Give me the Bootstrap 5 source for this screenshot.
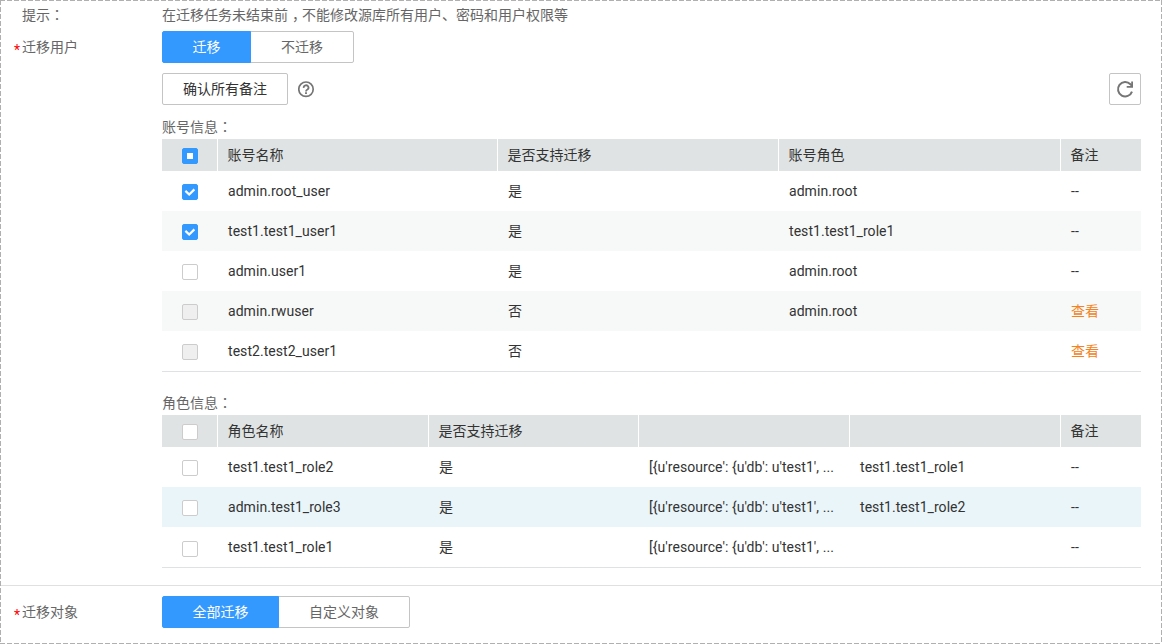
<!DOCTYPE html>
<html lang="zh-CN">
<head>
<meta charset="utf-8">
<meta name="viewport" content="width=device-width, initial-scale=1">
<title>迁移用户</title>
<link href="https://cdn.jsdelivr.net/npm/bootstrap@5.3.0/dist/css/bootstrap.min.css" rel="stylesheet">
<style>
:root{--dash-c:#b0b0b0}
body{font-family:Roboto,"Noto Sans CJK SC",sans-serif;font-size:14px;line-height:20px;color:#333;background:#fff;overflow:hidden}
.frame{height:644px;padding:5px 1px 1px;
  background:
  repeating-linear-gradient(90deg,var(--dash-c) 0 5px,transparent 5px 7px) 0 0/100% 1px no-repeat,
  repeating-linear-gradient(90deg,var(--dash-c) 0 5px,transparent 5px 7px) 0 100%/100% 1px no-repeat,
  repeating-linear-gradient(180deg,var(--dash-c) 0 5px,transparent 5px 7px) 0 0/1px 100% no-repeat,
  repeating-linear-gradient(180deg,var(--dash-c) 0 5px,transparent 5px 7px) 100% 0/1px 100% no-repeat}
.field-label{width:161px;padding-left:21px;color:#666}
.field-label.required{padding-left:13px}
.required::before{content:"*";display:inline-block;width:8px;color:red;line-height:14px;vertical-align:-3px}
.field-body{width:979px;color:#666}
.colon{font-family:"Noto Sans CJK TC",sans-serif;line-height:1}
.comma{font-feature-settings:"halt";padding:0 3px 0 4px}
.btn{--bs-btn-font-size:14px;--bs-btn-line-height:20px;--bs-btn-padding-y:5px;--bs-btn-padding-x:0;--bs-btn-border-radius:2px;--bs-btn-border-color:#c4c4c4;--bs-btn-color:#666;--bs-btn-active-bg:#39f;--bs-btn-active-border-color:#39f;--bs-btn-active-color:#fff;height:32px;white-space:nowrap}
.btn-group{--bs-border-radius:2px}
.btn-confirm{--bs-btn-color:#333;width:126px}
.btn-refresh{width:32px}
.grid-table{--bs-table-color:#333;--bs-table-bg:transparent;table-layout:fixed;width:979px;border-bottom:1px solid #dfe1e2}
.grid-table th,.grid-table td{padding:0 10px;border:0;font-weight:400;vertical-align:middle}
.grid-table th{height:32px;background:#dfe3e4;border-right:1px solid #fff}
.grid-table th:last-child{border-right:0}
.grid-table td{height:40px;padding-left:11px;padding-right:0;letter-spacing:.05px}
.grid-table tr>:first-child{padding:0 0 1px 1px;text-align:center}
.role-table tr>:first-child{padding-bottom:0;padding-top:1px}
.role-table tr:last-child td{height:41px}
.row-alt{background:#f7f9f8}
.row-hover{background:#eaf5fa}
.form-check-input{width:16px;height:16px;margin:0;border-color:#ccc;display:inline-block;vertical-align:middle}
.form-check-input[type=checkbox]{border-radius:2px}
.form-check-input:checked,.form-check-input.partial{background-color:#39f;border-color:#39f}
.form-check-input:checked[type=checkbox]{background-image:url("data:image/svg+xml,%3Csvg xmlns='http://www.w3.org/2000/svg' viewBox='0 0 14 14'%3E%3Cpath fill='none' stroke='%23fff' stroke-width='2.2' d='M2.4 5.9l3.8 3.6 5.2-5.1'/%3E%3C/svg%3E")}
.form-check-input.partial{background-image:linear-gradient(#fff,#fff);background-size:6px 6px;background-position:center}
.form-check-input:disabled{background-color:#efefef;opacity:1}
.view-link{color:#f90;color:#f58220;text-decoration:none}
.section-line{border-top:1px solid #e0e0e0}
</style>
</head>
<body>
<main class="frame">
  <div class="d-flex" style="height:20px">
    <div class="field-label">提示<span class="colon" lang="zh-TW">：</span></div>
    <div class="field-body">在迁移任务未结束前<span class="comma">，</span>不能修改源库所有用户、密码和用户权限等</div>
  </div>
  <div class="d-flex" style="margin-top:6px">
    <div class="field-label required pt-1 mt-1" style="line-height:16px">迁移用户</div>
    <div class="field-body">
      <div class="btn-group d-flex" style="width:192px">
        <button class="btn active" style="width:89px;flex:none">迁移</button>
        <button class="btn">不迁移</button>
      </div>
      <div class="d-flex align-items-center" style="margin-top:10px">
        <button class="btn btn-confirm">确认所有备注</button>
        <svg style="margin-left:10px" width="17" height="17" viewBox="0 0 17 17" fill="none" stroke="#757575"><circle cx="8" cy="8.2" r="7.2" stroke-width="1.7"/><path d="M5.7 6.8a2.4 2.3 0 1 1 3.7 1.7q-1.4.8-1.4 1.9" stroke-width="1.8"/><path d="M8 11.3v1.7" stroke-width="1.9"/></svg>
        <button class="btn btn-refresh ms-auto d-flex align-items-center justify-content-center" aria-label="刷新"><svg width="20" height="20" viewBox="0 0 20 20" fill="none" stroke="#757575" stroke-width="2"><path d="M17 12.6A7.2 7.2 0 1 1 15.4 5.2L17 7"/><path d="M17.1 2.5v5.3h-5.4" stroke-width="1.8"/></svg></button>
      </div>
      <div style="margin-top:12px;height:22px">账号信息<span class="colon" lang="zh-TW">：</span></div>
      <table class="table grid-table mb-0">
        <colgroup><col style="width:55px"><col style="width:280px"><col style="width:281px"><col style="width:282px"><col style="width:81px"></colgroup>
        <thead><tr><th><input class="form-check-input partial" type="checkbox"></th><th>账号名称</th><th>是否支持迁移</th><th>账号角色</th><th>备注</th></tr></thead>
        <tbody>
          <tr><td><input class="form-check-input" type="checkbox" checked></td><td>admin.root_user</td><td>是</td><td>admin.root</td><td>--</td></tr>
          <tr class="row-alt"><td><input class="form-check-input" type="checkbox" checked></td><td>test1.test1_user1</td><td>是</td><td>test1.test1_role1</td><td>--</td></tr>
          <tr><td><input class="form-check-input" type="checkbox"></td><td>admin.user1</td><td>是</td><td>admin.root</td><td>--</td></tr>
          <tr class="row-alt"><td><input class="form-check-input" type="checkbox" disabled></td><td>admin.rwuser</td><td>否</td><td>admin.root</td><td><a class="view-link" href="#">查看</a></td></tr>
          <tr><td><input class="form-check-input" type="checkbox" disabled></td><td>test2.test2_user1</td><td>否</td><td></td><td><a class="view-link" href="#">查看</a></td></tr>
        </tbody>
      </table>
      <div style="margin-top:21px;height:22px">角色信息<span class="colon" lang="zh-TW">：</span></div>
      <table class="table grid-table role-table mb-0">
        <colgroup><col style="width:55px"><col style="width:211px"><col style="width:210px"><col style="width:211px"><col style="width:211px"><col style="width:81px"></colgroup>
        <thead><tr><th><input class="form-check-input" type="checkbox"></th><th>角色名称</th><th>是否支持迁移</th><th></th><th></th><th>备注</th></tr></thead>
        <tbody>
          <tr><td><input class="form-check-input" type="checkbox"></td><td>test1.test1_role2</td><td>是</td><td class="text-nowrap">[{u'resource': {u'db': u'test1', ...</td><td>test1.test1_role1</td><td>--</td></tr>
          <tr class="row-hover"><td><input class="form-check-input" type="checkbox"></td><td>admin.test1_role3</td><td>是</td><td class="text-nowrap">[{u'resource': {u'db': u'test1', ...</td><td>test1.test1_role2</td><td>--</td></tr>
          <tr><td><input class="form-check-input" type="checkbox"></td><td>test1.test1_role1</td><td>是</td><td class="text-nowrap">[{u'resource': {u'db': u'test1', ...</td><td></td><td>--</td></tr>
        </tbody>
      </table>
    </div>
  </div>
  <div class="section-line d-flex" style="margin-top:17px;padding-top:10px">
    <div class="field-label required pt-1 mt-1" style="line-height:16px">迁移对象</div>
    <div class="field-body">
      <div class="btn-group d-flex" style="width:248px">
        <button class="btn active" style="width:117px;flex:none">全部迁移</button>
        <button class="btn">自定义对象</button>
      </div>
    </div>
  </div>
</main>
<script src="https://cdn.jsdelivr.net/npm/bootstrap@5.3.0/dist/js/bootstrap.bundle.min.js"></script>
</body>
</html>
